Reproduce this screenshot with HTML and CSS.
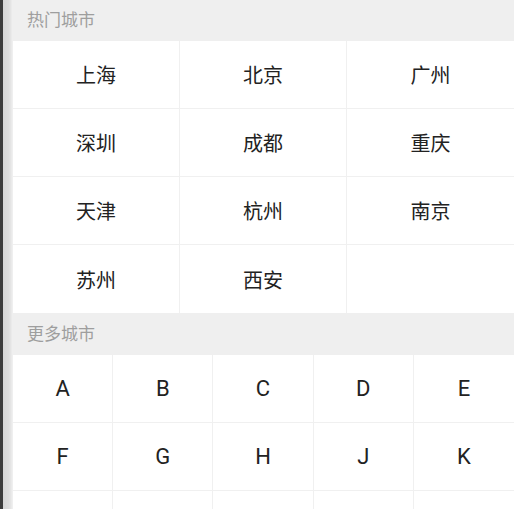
FILE: index.html
```html
<!DOCTYPE html>
<html lang="zh-CN">
<head>
    <meta charset="UTF-8">
    <meta name="viewport" content="width=device-width, initial-scale=1.0">
    <title>选择城市</title>
    <link rel="stylesheet" href="styles.css">
</head>
<body>
    <div class="screen">
        <div class="edge"></div>
        <div class="city-list">
            <div class="section-title">热门城市</div>
            <div class="hot-grid">
                <div class="cell">上海</div>
                <div class="cell">北京</div>
                <div class="cell">广州</div>
                <div class="cell">深圳</div>
                <div class="cell">成都</div>
                <div class="cell">重庆</div>
                <div class="cell">天津</div>
                <div class="cell">杭州</div>
                <div class="cell">南京</div>
                <div class="cell">苏州</div>
                <div class="cell">西安</div>
                <div class="cell"></div>
            </div>
            <div class="section-title">更多城市</div>
            <div class="letter-grid">
                <div class="cell letter">A</div>
                <div class="cell letter">B</div>
                <div class="cell letter">C</div>
                <div class="cell letter">D</div>
                <div class="cell letter">E</div>
                <div class="cell letter">F</div>
                <div class="cell letter">G</div>
                <div class="cell letter">H</div>
                <div class="cell letter">J</div>
                <div class="cell letter">K</div>
                <div class="cell letter"></div>
                <div class="cell letter"></div>
                <div class="cell letter"></div>
                <div class="cell letter"></div>
                <div class="cell letter"></div>
            </div>
        </div>
    </div>
</body>
</html>
```

FILE: styles.css
```css
/* city picker */
body {
    margin: 0;
    padding: 0;
    overflow: hidden;
    background: #fff;
    font-family: "Noto Sans CJK SC", "Noto Sans", sans-serif;
}

.screen {
    display: flex;
    height: 509px;
    overflow: hidden;
}

.edge {
    flex: 0 0 13px;
    background: linear-gradient(to right, #3a3a3a 0, #3a3a3a 3px, #d4d4d4 3px, #dcdcdc 9px, #f2f2f2 13px);
}

.city-list {
    flex: 1;
    margin-top: -1px;
}

.section-title {
    height: 42px;
    line-height: 40px;
    padding-left: 14px;
    background: #efefef;
    color: #9e9e9e;
    font-size: 17px;
}

.hot-grid {
    display: grid;
    grid-template-columns: repeat(3, 1fr);
}

.letter-grid {
    display: grid;
    grid-template-columns: repeat(5, 1fr);
}

.cell {
    height: 68px;
    display: flex;
    align-items: center;
    justify-content: center;
    box-sizing: border-box;
    border-right: 1px solid #f0f0f0;
    border-bottom: 1px solid #f0f0f0;
    color: #222;
    font-size: 20px;
}

.hot-grid .cell:nth-child(3n),
.letter-grid .cell:nth-child(5n) {
    border-right: none;
}

.hot-grid .cell:nth-last-child(-n+3) {
    border-bottom: none;
}

.letter {
    font-family: Roboto, "Liberation Sans", sans-serif;
    font-size: 22px;
}
```
